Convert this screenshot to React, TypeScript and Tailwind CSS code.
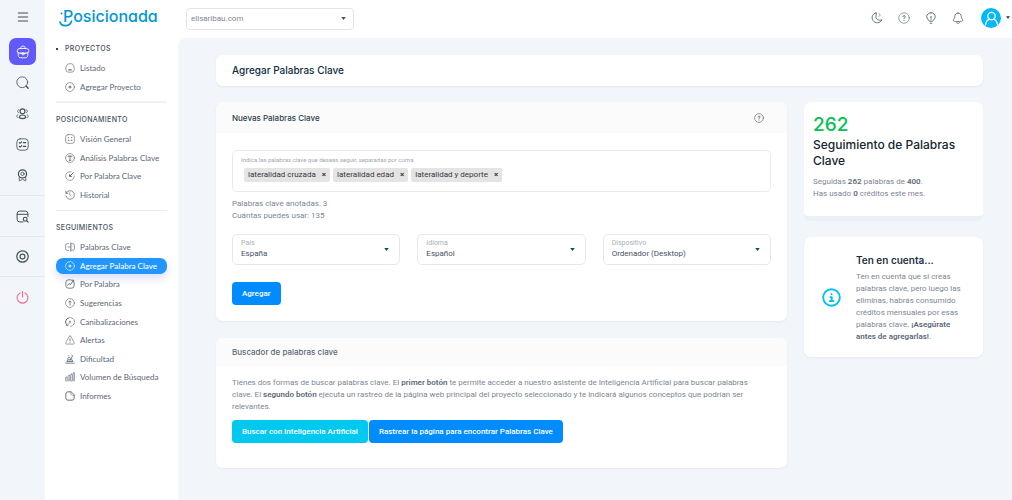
import type { ReactNode } from "react";

function Icon({ children, size = "size-[10px]", stroke = 1.5 }: { children: ReactNode; size?: string; stroke?: number }) {
  return (
    <svg
      viewBox="0 0 24 24"
      className={`${size} shrink-0`}
      fill="none"
      stroke="currentColor"
      strokeWidth={stroke}
      strokeLinecap="round"
      strokeLinejoin="round"
      aria-hidden="true"
    >
      {children}
    </svg>
  );
}

const circle = <circle cx="12" cy="12" r="10.5" />;

const glyphs: Record<string, ReactNode> = {
  list: (
    <>
      <path d="M2 11a10 9.500 0 0 1 20 0V16a6 6 0 0 1-6 6H8a6 6 0 0 1-6-6z" />
      <path d="M9 16.500h6" strokeWidth="2.500" />
    </>
  ),
  plus: (
    <>
      {circle}
      <path d="M12 9.500v5M9.500 12h5" strokeWidth="2.600" />
    </>
  ),
  grid: (
    <>
      <rect x="1.5" y="1.5" width="21" height="21" rx="6" />
      <path d="M8 8.5h.1M16 8.5h.1M8 15h1.5M15 15h1.5" strokeWidth="2.8" />
    </>
  ),
  text: (
    <>
      {circle}
      <path d="M7.5 9V7.5h9V9M12 7.5v10M10 17.5h4" strokeWidth="2" />
    </>
  ),
  gauge: (
    <>
      <path d="M15 2A10.500 10.500 0 1 0 22.500 12" strokeDasharray="26 3" />
      <path d="M12 12 20 4M11 8.500v4.500h4.500" strokeWidth="2.4" />
    </>
  ),
  history: (
    <>
      <path d="M3 7a10.300 10.300 0 1 1-1 7M2 3v5h5" strokeWidth="1.800" />
      <path d="M11.500 7v5.500l3 2" />
    </>
  ),
  field: (
    <>
      <path d="M9 4H5a3.500 3.500 0 0 0-3.500 3.500v9A3.500 3.500 0 0 0 5 20h4M16 4h3a3.500 3.500 0 0 1 3.500 3.500v9A3.500 3.500 0 0 1 19 20h-3M7 12h5" />
      <path d="M14 2v20" strokeWidth="2.200" />
    </>
  ),
  chart: (
    <>
      <path d="M14 2H8a6 6 0 0 0-6 6v8a6 6 0 0 0 6 6h8a6 6 0 0 0 6-6v-6" strokeWidth="2" />
      <path d="m6.500 15 3.500-4 3 2.500L20 4M16 3h5v5" strokeWidth="2.300" />
    </>
  ),
  up: (
    <>
      {circle}
      <path d="M12 17V7.500M9 10l3-3 3 3" strokeWidth="1.800" />
    </>
  ),
  cycle: (
    <>
      <path d="M10 1.700A10.400 10.400 0 0 0 5 19.700" strokeWidth="2.400" />
      <path d="M14 1.700a10.400 10.400 0 0 1 0 20.600" strokeDasharray="5 3.500" strokeWidth="1.800" />
      <path d="M3 20.500h4.500V16" />
      <path d="M12 10v4" strokeWidth="2.600" />
    </>
  ),
  alert: (
    <>
      <path d="M12 2.500c1 0 1.800.5 2.300 1.500l7.700 14c1 2-.2 3.800-2.300 3.800H4.300C2.200 21.800 1 20 2 18L9.700 4c.5-1 1.300-1.500 2.300-1.500z" />
      <path d="M12 9v5M12 17.500v.1" strokeWidth="2" />
    </>
  ),
  climb: (
    <>
      <path d="M1.500 22h21M5 18h14l-2-4H9z" strokeWidth="2" />
      <path d="M7 14V9l3-2 3 3v4M9 3.500h.1M16 3l3 2-3 2v5" strokeWidth="1.800" />
    </>
  ),
  bars: (
    <>
      <rect x="1" y="12" width="4" height="10" rx="2" />
      <rect x="7.500" y="8" width="4" height="14" rx="2" />
      <rect x="13.500" y="5" width="4" height="17" rx="2" />
      <rect x="19.500" y="2" width="3.500" height="20" rx="1.700" />
    </>
  ),
  file: (
    <>
      <path d="M14 2H7a5 5 0 0 0-5 5v10a5 5 0 0 0 5 5h10a5 5 0 0 0 5-5v-7z" strokeWidth="2.200" />
      <path d="M14 2v4a4 4 0 0 0 4 4h4" />
    </>
  ),
  help: (
    <>
      {circle}
      <path d="M9.800 9.500a2.300 2.300 0 1 1 3.500 2c-.9.500-1.300 1-1.300 2M12 16.800v.1" strokeWidth="2" />
    </>
  ),
};

type Item = { label: string; icon: string; active?: boolean };

function MenuItems({ items, height }: { items: Item[]; height: string }) {
  return (
    <ul className={`flex flex-col justify-between ${height}`}>
      {items.map((item) => (
        <li key={item.label}>
          <a
            href="#"
            aria-current={item.active ? "page" : undefined}
            className={`flex h-4 items-center gap-[5px] whitespace-nowrap rounded-[7px] pl-[9px] font-['Lato','Noto_Sans',sans-serif] text-[8px] ${
              item.active
                ? "bg-[#2196fd] font-medium text-white shadow-[0_4px_10px_#d9dcfa]"
                : "text-[#5b6774]"
            }`}
          >
            <Icon>{glyphs[item.icon]}</Icon>
            {item.label}
          </a>
        </li>
      ))}
    </ul>
  );
}

function Heading({ children, bullet }: { children: ReactNode; bullet?: boolean }) {
  return (
    <h2 className="flex h-4 items-center font-['Inter','Noto_Sans',sans-serif] text-[7px] font-medium tracking-wider text-[#44525f]">
      {bullet && <span className="mr-[7px] size-[2px] rounded-full bg-black" />}
      {children}
    </h2>
  );
}

function RailLink({ label, children, className }: { label: string; children: ReactNode; className: string }) {
  return (
    <a href="#" aria-label={label} className={`flex w-full items-center justify-center ${className}`}>
      {children}
    </a>
  );
}

function Rail() {
  return (
    <nav aria-label="Secciones" className="flex w-[45px] shrink-0 flex-col items-center bg-[#f2f5fa] text-[#3f4d5a]">
      <button aria-label="Menú" className="flex h-[38px] items-center pb-[5px]">
        <Icon stroke={1.800} size="size-[14px]">
          <path d="M4 5h16M4 12h16M4 19h16" />
        </Icon>
      </button>
      <a href="#" aria-label="Proyectos" className="flex size-[27px] items-center justify-center rounded-[7px] bg-[#6259fb] text-white">
        <Icon size="size-[14px]">
          <rect x="2" y="6" width="20" height="8" rx="4" />
          <path d="M8 6c0-3 1-4 4-4s4 1 4 4M3.500 13 4 18c.3 3 1.800 4 4.500 4h7c2.700 0 4.200-1 4.500-4l.5-5M7 13.500l3 1.500M17 13.500 14 15" />
          <circle cx="12" cy="15" r="2" />
        </Icon>
      </a>
      <RailLink label="Buscar" className="mt-[2px] h-[31px]">
        <Icon size="size-[13px]">
          <circle cx="11.500" cy="11.500" r="10" />
          <path d="m19 19 3.500 3.500" strokeWidth="2.500" />
        </Icon>
      </RailLink>
      <RailLink label="Usuarios" className="h-[30px]">
        <Icon size="size-[13px]" stroke={1.700}>
          <circle cx="12" cy="8" r="4.500" strokeWidth="2" />
          <path d="M6.500 18.500c0-5 11-5 11 0 0 4-11 4-11 0z" strokeWidth="2" />
          <path d="M5.500 5c-3.500 0-3.500 5-.3 5.500M18.500 5c3.500 0 3.500 5 .3 5.500M3.500 14.500c-3.500.800-3 5 .5 5M20.500 14.500c3.500.800 3 5-.5 5" strokeWidth="1.400" />
        </Icon>
      </RailLink>
      <RailLink label="Tareas" className="h-[32px]">
        <Icon size="size-[13px]">
          <rect x="1.500" y="1.500" width="21" height="21" rx="6" />
          <path d="m6 8.500 1.500 1.500L10.500 7M6 15.500l1.500 1.500 3-3M13.500 8.500h4.500M13.500 15.500h4.500" strokeWidth="2" />
        </Icon>
      </RailLink>
      <RailLink label="Logros" className="h-[31px]">
        <Icon size="size-[13px]" stroke={2.200}>
          <circle cx="12" cy="9" r="7.500" />
          <circle cx="12" cy="9" r="3" strokeWidth="1.500" />
          <path d="M6 15v7l6-3 6 3v-7" strokeWidth="1.400" />
        </Icon>
      </RailLink>
      <RailLink label="Web" className="mt-[4px] h-[42px] border-y border-[#e3e8f0]">
        <Icon size="size-[13px]">
          <path d="M13 22H7a5 5 0 0 1-5-5V7a5 5 0 0 1 5-5h10a5 5 0 0 1 5 5v5M2 8h20" strokeWidth="1.800" />
          <circle cx="17" cy="17" r="3.500" strokeWidth="2" />
          <path d="m20 20 2.500 2.500" strokeWidth="2" />
        </Icon>
      </RailLink>
      <RailLink label="Ajustes" className="h-[40px] border-b border-[#e3e8f0]">
        <Icon size="size-[13px]" stroke={2.200}>
          {circle}
          <circle cx="12" cy="12" r="4.500" />
        </Icon>
      </RailLink>
      <RailLink label="Salir" className="h-[41px] text-[#f5678f]">
        <Icon size="size-[13px]" stroke={2}>
          <path d="M7.500 3.500a10 10 0 1 0 9 0M12 1v10" />
        </Icon>
      </RailLink>
    </nav>
  );
}

function Sidebar() {
  return (
    <aside className="w-[133px] shrink-0 bg-white">
      <a href="#" aria-label="Posicionada" className="flex h-[38px] items-start pl-[14px] pt-1 text-[#0096d6]">
        <span className="relative pl-1 font-['Inter','Noto_Sans',sans-serif] text-[16px] font-medium leading-6 [font-feature-settings:'cv11']">
          Posicionada
          <svg viewBox="0 0 14 18" className="absolute left-0 top-[5px] h-[18px] w-[14px]" fill="none" stroke="currentColor" strokeWidth="1.600" strokeLinecap="round" aria-hidden="true">
            <path d="M1 13c1 5 10.500 5 11.500-1" />
            <path d="M2.500 4.500v.1" strokeWidth="2" />
          </svg>
        </span>
      </a>
      <nav aria-label="Menú principal" className="px-[11px]">
        <section className="border-b-2 border-[#eef1f5] pb-[6px] pt-[3px]">
          <Heading bullet>PROYECTOS</Heading>
          <div className="pt-[3px]">
            <MenuItems
              height="h-[35px]"
              items={[
                { label: "Listado", icon: "list" },
                { label: "Agregar Proyecto", icon: "plus" },
              ]}
            />
          </div>
        </section>
        <section className="border-b border-[#e8ecf1] pb-[7px] pt-[9px]">
          <Heading>POSICIONAMIENTO</Heading>
          <div className="pt-[3px]">
            <MenuItems
              height="h-[72px]"
              items={[
                { label: "Visión General", icon: "grid" },
                { label: "Análisis Palabras Clave", icon: "text" },
                { label: "Por Palabra Clave", icon: "gauge" },
                { label: "Historial", icon: "history" },
              ]}
            />
          </div>
        </section>
        <section className="pt-[9px]">
          <Heading>SEGUIMIENTOS</Heading>
          <div className="pt-[3px]">
            <MenuItems
              height="h-[165px]"
              items={[
                { label: "Palabras Clave", icon: "field" },
                { label: "Agregar Palabra Clave", icon: "plus", active: true },
                { label: "Por Palabra", icon: "chart" },
                { label: "Sugerencias", icon: "up" },
                { label: "Canibalizaciones", icon: "cycle" },
                { label: "Alertas", icon: "alert" },
                { label: "Dificultad", icon: "climb" },
                { label: "Volumen de Búsqueda", icon: "bars" },
                { label: "Informes", icon: "file" },
              ]}
            />
          </div>
        </section>
      </nav>
    </aside>
  );
}

function Caret({ className }: { className: string }) {
  return (
    <svg viewBox="0 0 6 4" className={`pointer-events-none absolute ${className}`} fill="currentColor" aria-hidden="true">
      <path d="M0 0h6L3 4z" />
    </svg>
  );
}

function TopBar() {
  return (
    <header className="flex h-[38px] items-center justify-between bg-white pl-[8px] pr-[2px]">
      <div className="relative mb-px h-[22px] w-[168px]">
        <select aria-label="Proyecto" className="size-full appearance-none rounded-[4px] border border-[#e1e6ec] bg-white pl-[4px] text-[8px] text-[#7f8891]">
          <option>elisaribau.com</option>
        </select>
        <Caret className="right-[8px] top-[9px] h-[3px] w-[5px] text-[#4b4f54]" />
      </div>
      <div className="flex items-center gap-[15px] pb-[2px] text-[#52677a]">
        <button aria-label="Modo oscuro">
          <Icon size="size-[12px]" stroke={1.800}>
            <path d="M10 2C3 3 0 11 4 17s14 6.500 18-1.500c-6 2.500-14-1-12-8 .3-2 1-3.500 0-5.500z" />
            <path d="m16 3 1 2 2 1-2 1-1 2" strokeWidth="1" />
          </Icon>
        </button>
        <button aria-label="Ayuda">
          <Icon size="size-[12px]" stroke={1.200}>{glyphs.help}</Icon>
        </button>
        <button aria-label="Ideas">
          <Icon size="size-[12px]" stroke={1.800}>
            <path d="M12 1.500c-5 0-8.500 3.500-8.500 8 0 4 3 5 5.500 9h6c2.500-4 5.500-5 5.500-9 0-4.500-3.500-8-8.500-8zM10.500 22.500h3" />
            <path d="M12 9v7M10.500 10h3" strokeWidth="1.300" />
          </Icon>
        </button>
        <button aria-label="Notificaciones">
          <Icon size="size-[12px]" stroke={1.700}>
            <path d="M12 2c-4 0-6.500 3-6.500 7 0 4-3 5-3 7.500 0 1.500 2 2.500 9.500 2.500s9.500-1 9.500-2.500c0-2.500-3-3.500-3-7.500 0-4-2.500-7-6.500-7zM9 21.500c1.500 1.500 4.500 1.500 6 0" />
          </Icon>
        </button>
        <button aria-label="Cuenta" className="relative ml-[2px] mr-[9px] flex size-5 items-center justify-center rounded-full bg-[#00b8fb] text-white">
          <Icon size="size-[15px]" stroke={2}>
            <circle cx="12" cy="8" r="6" />
            <path d="M2.500 22c.5-5 3-8 6.500-9M21.500 22c-.5-5-3-8-6.500-9" />
          </Icon>
          <Caret className="-right-[9px] top-[8px] h-[3px] w-[4px] text-[#24323f]" />
        </button>
      </div>
    </header>
  );
}

function Tag({ children }: { children: string }) {
  return (
    <li className="flex h-[14px] items-center gap-[6px] whitespace-nowrap rounded-[2px] bg-[#e4e4e4] px-1 text-[8px] text-[#33383d]">
      {children}
      <button aria-label={`Quitar ${children}`} className="text-[8px] font-bold">×</button>
    </li>
  );
}

function Field({ id, label, value }: { id: string; label: string; value: string }) {
  return (
    <div className="relative h-[31px] rounded-[5px] border border-[#e3e9ef] px-2 pt-[4px]">
      <label htmlFor={id} className="block text-[7px] leading-[9px] text-[#a9afb6]">{label}</label>
      <select id={id} className="block h-[12px] w-full appearance-none bg-transparent text-[8px] leading-[12px] text-[#44525f]">
        <option>{value}</option>
      </select>
      <Caret className="right-[10px] top-[13px] h-[3px] w-[5px] text-[#17485f]" />
    </div>
  );
}

const card = "overflow-hidden rounded-[7px] bg-white shadow-[0_1px_2px_#e4eaf2]";
const title = "font-['Inter','Noto_Sans',sans-serif]";

function Bold({ children }: { children: ReactNode }) {
  return <strong className="font-semibold text-[#5c6975]">{children}</strong>;
}

export default function App() {
  return (
    <div className="flex min-h-screen bg-white font-['Roboto','Noto_Sans',sans-serif] text-[8px] text-[#7c8794]">
      <Rail />
      <Sidebar />
      <div className="flex min-w-0 flex-1 flex-col">
        <TopBar />
        <main className="flex-1 rounded-tl-[8px] bg-[#f2f5fa] pb-8 pl-[38px] pr-[29px] pt-[17px]">
          <div className={`flex h-[31px] items-center px-4 ${card}`}>
            <h1 className={`text-[10px] font-medium text-[#0e2c40] ${title}`}>Agregar Palabras Clave</h1>
          </div>
          <div className="mt-4 grid grid-cols-[minmax(0,1fr)_179px] items-start gap-[17px]">
            <div className="flex flex-col gap-[17px]">
              <section className={card}>
                <header className="flex h-[31px] items-center justify-between bg-[#fbfbfb] pl-4 pr-[23px]">
                  <h2 className={`text-[8px] font-medium text-[#2c3d4b] ${title}`}>Nuevas Palabras Clave</h2>
                  <button aria-label="Ayuda" className="text-[#55606b]">
                    <Icon>{glyphs.help}</Icon>
                  </button>
                </header>
                <form className="px-4 pb-4 pt-[17px]" onSubmit={(e) => e.preventDefault()}>
                  <div className="h-[42px] rounded-[5px] border border-[#e7ebf0] px-2 pt-1">
                    <label htmlFor="keywords" className="block text-[6px] leading-[9px] text-[#a3a9b0]">
                      Indica las palabras clave que deseas seguir, separadas por coma
                    </label>
                    <div className="flex items-center gap-[3px] pl-[3px] pt-[4px]">
                      <ul className="flex gap-[3px]">
                        <Tag>lateralidad cruzada</Tag>
                        <Tag>lateralidad edad</Tag>
                        <Tag>lateralidad y deporte</Tag>
                      </ul>
                      <input id="keywords" type="text" className="h-[14px] min-w-0 flex-1 bg-transparent outline-none" />
                    </div>
                  </div>
                  <p className="mt-[6px] leading-[12px]">
                    Palabras clave anotadas: 3<br />
                    Cuántas puedes usar: 135
                  </p>
                  <div className="mt-3 grid grid-cols-3 gap-[17px]">
                    <Field id="country" label="País" value="España" />
                    <Field id="language" label="Idioma" value="Español" />
                    <Field id="device" label="Dispositivo" value="Ordenador (Desktop)" />
                  </div>
                  <button type="submit" className="mt-[17px] h-[23px] rounded-[4px] bg-[#008cff] px-[10px] text-[8px] font-medium text-white">
                    Agregar
                  </button>
                </form>
              </section>
              <section className={card}>
                <header className="flex h-[28px] items-center bg-[#fbfbfb] px-4">
                  <h2 className={`text-[8px] font-medium text-[#5c6975] ${title}`}>Buscador de palabras clave</h2>
                </header>
                <div className="px-4 pb-[25px] pt-[11px]">
                  <p className="pr-4 leading-[12px]">
                    Tienes dos formas de buscar palabras clave. El <Bold>primer botón</Bold> te permite acceder a nuestro asistente de Inteligencia Artificial para buscar palabras clave. El <Bold>segundo botón</Bold> ejecuta un rastreo de la página web principal del proyecto seleccionado y te indicará algunos conceptos que podrían ser relevantes.
                  </p>
                  <div className="mt-[7px] flex gap-[1px]">
                    <button className="h-[23px] rounded-[4px] bg-[#00c8ee] px-[10px] font-medium text-white">Buscar con Inteligencia Artificial</button>
                    <button className="h-[23px] rounded-[4px] bg-[#008cff] px-[10px] font-medium text-white">Rastrear la página para encontrar Palabras Clave</button>
                  </div>
                </div>
              </section>
            </div>
            <div className="flex flex-col gap-4">
              <section className="overflow-hidden rounded-[7px] border-b-[5px] border-[#ebf0f6] bg-white px-[9px] pb-4 pt-3">
                <p className={`text-[19px] font-medium leading-[22px] text-[#00c153] ${title}`}>262</p>
                <h2 className={`mt-px text-[12px] font-medium leading-4 text-[#14262f] ${title}`}>Seguimiento de Palabras Clave</h2>
                <p className="mt-[7px] leading-[12px]">
                  Seguidas <Bold>262</Bold> palabras de <Bold>400</Bold>.<br />
                  Has usado <Bold>0</Bold> créditos este mes.
                </p>
              </section>
              <section className={`flex items-center gap-[15px] pb-[14px] pl-[18px] pr-4 pt-[15px] ${card}`}>
                <span className="text-[#00c2ee]">
                  <Icon size="size-[19px]" stroke={2.400}>
                    <circle cx="12" cy="12" r="10.500" />
                    <path d="M12 7.500v.1M10.500 11.500H12.300v5M10 16.500h4.500" />
                  </Icon>
                </span>
                <div>
                  <h2 className={`text-[10px] font-semibold leading-4 text-[#1c3045] ${title}`}>Ten en cuenta...</h2>
                  <p className="mt-[3px] leading-[12px]">
                    Ten en cuenta que si creas palabras clave, pero luego las eliminas, habrás consumido créditos mensuales por esas palabras clave. <Bold>¡Asegúrate antes de agregarlas!</Bold>.
                  </p>
                </div>
              </section>
            </div>
          </div>
        </main>
      </div>
    </div>
  );
}
